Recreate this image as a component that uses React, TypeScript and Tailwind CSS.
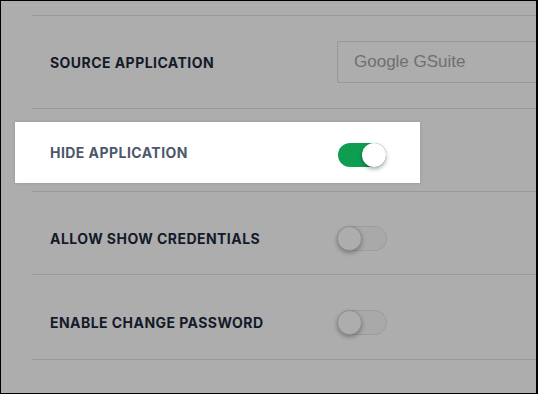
import React from 'react'

function Toggle({ on, dim }: { on: boolean; dim?: boolean }) {
  if (on) {
    return (
      <div className="relative w-[48px] h-[24px] rounded-full bg-[#0f9d52]">
        <div className="absolute right-0 top-0 w-[24px] h-[24px] rounded-full bg-white shadow-[0_2px_4px_rgba(0,0,0,0.35)]" />
      </div>
    )
  }
  return (
    <div className={`relative w-[50px] h-[25px] rounded-full border border-[#9c9c9c] ${dim ? 'bg-[#a9a9a9]' : 'bg-white'}`}>
      <div className="absolute left-[-1px] top-[-1px] w-[25px] h-[25px] rounded-full border border-[#8f8f8f] bg-[#adadad] shadow-[0_2px_4px_rgba(0,0,0,0.3)]" />
    </div>
  )
}

const label = "font-['Inter',sans-serif] font-bold text-[14px] tracking-[0.45px] uppercase"

export default function App() {
  return (
    <div className="w-[538px] h-[394px] overflow-hidden border border-black border-r-2 bg-[#adadad]">
      <div className="ml-[5px] mt-[4px] h-full border-l border-t border-[#b3b3b3] pl-[25px]">
        <div className="mt-[9px] border-t border-[#999999]">
          {/* source application */}
          <div className="flex items-center pt-[25px] pb-[25px] pl-[18px] border-b border-[#999999]">
            <div className={`${label} w-[287px] text-[#141a2a]`}>Source Application</div>
            <div className="flex-1 h-[42px] flex items-center pl-[16px] border border-[#989898] border-r-0 rounded-l-[3px] font-['Liberation_Sans',Arial,sans-serif] text-[17px] text-[#6f6f6f]">
              Google GSuite
            </div>
          </div>

          {/* hide application (highlighted) */}
          <div className="pt-[13px] pb-[8px] border-b border-[#999999]">
            <div className="ml-[-17px] w-[405px] h-[61px] flex items-center pl-[35px] bg-white shadow-[0_0_3px_rgba(0,0,0,0.15)]">
              <div className={`${label} w-[288px] text-[#4c586b]`}>Hide Application</div>
              <div className="mt-[4px]">
                <Toggle on />
              </div>
            </div>
          </div>

          {/* allow show credentials */}
          <div className="flex items-center pt-[34px] pb-[23px] pl-[18px] border-b border-[#999999]">
            <div className={`${label} w-[287px] text-[#141a2a]`}>Allow Show Credentials</div>
            <Toggle on={false} dim />
          </div>

          {/* enable change password */}
          <div className="flex items-center pt-[35px] pb-[24px] pl-[18px] border-b border-[#999999]">
            <div className={`${label} w-[287px] text-[#141a2a]`}>Enable Change Password</div>
            <Toggle on={false} dim />
          </div>
        </div>
      </div>
    </div>
  )
}
